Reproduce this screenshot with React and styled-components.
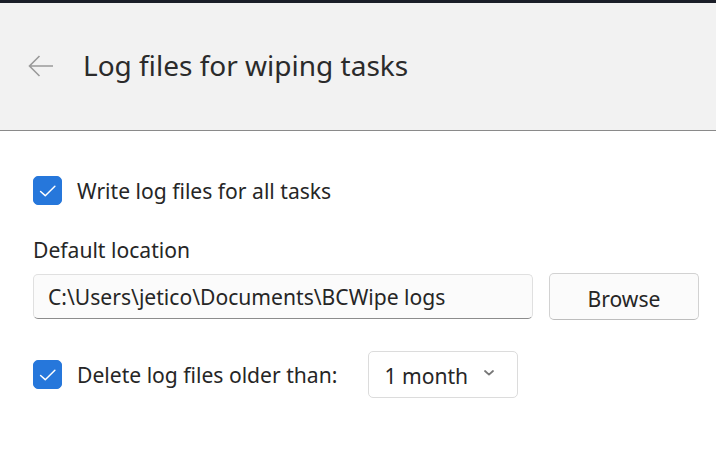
import React, { useState } from 'react'
import styled, { createGlobalStyle } from 'styled-components'

const GlobalStyle = createGlobalStyle`
    html, body {
        margin: 0;
        padding: 0;
        background: #fff;
    }
    body {
        font-family: "Noto Sans", "Open Sans", sans-serif;
        color: #262626;
    }
`;

function Checkbox({ checked, onChange }) {
    return (
        <CheckBoxStyled checked={checked} onClick={() => onChange(!checked)}>
            {checked && (
                <svg width="22" height="22" viewBox="0 0 16 16">
                    <path d="M2.6 8.4 L6 11.4 L13 4.6" fill="none" stroke="#fff" strokeWidth="1.1" strokeLinecap="round" strokeLinejoin="round" />
                </svg>
            )}
        </CheckBoxStyled>
    )
}

function App() {
    const [writeLogs, setWriteLogs] = useState(true)
    const [deleteOld, setDeleteOld] = useState(true)

    return (
        <>
            <GlobalStyle />
            <Page>
                <TopBar />
                <Header>
                    <BackButton aria-label="Back">
                        <svg width="26" height="22" viewBox="0 0 26 22">
                            <path d="M1.5 11 H25 M11.5 1 L1.5 11 L11.5 21" fill="none" stroke="#9a9a9a" strokeWidth="1.6" />
                        </svg>
                    </BackButton>
                    <Title>Log files for wiping tasks</Title>
                </Header>
                <Content>
                    <CheckRow>
                        <Checkbox checked={writeLogs} onChange={setWriteLogs} />
                        <Label>Write log files for all tasks</Label>
                    </CheckRow>
                    <FieldLabel>Default location</FieldLabel>
                    <PathRow>
                        <PathInput value="C:\Users\jetico\Documents\BCWipe logs" readOnly />
                        <Button>Browse</Button>
                    </PathRow>
                    <DeleteRow>
                        <Checkbox checked={deleteOld} onChange={setDeleteOld} />
                        <Label>Delete log files older than:</Label>
                        <Select>
                            <span>1 month</span>
                            <svg width="12" height="8" viewBox="0 0 12 8">
                                <path d="M2 2 L6 5.6 L10 2" fill="none" stroke="#777" strokeWidth="1.8" strokeLinecap="round" strokeLinejoin="round" />
                            </svg>
                        </Select>
                    </DeleteRow>
                </Content>
            </Page>
        </>
    )
}

const Page = styled.div`
    width: 716px;
    height: 459px;
    overflow: hidden;
    background: #fff;
`;

const TopBar = styled.div`
    height: 3px;
    background: #1b1e28;
`;

const Header = styled.header`
    height: 128px;
    box-sizing: border-box;
    background: #f2f2f2;
    border-bottom: 1px solid #8a8a8a;
    display: flex;
    align-items: center;
    padding: 0 0 0 28px;
`;

const BackButton = styled.div`
    display: flex;
    align-items: center;
    width: 55px;
    margin-top: -1px;
`;

const Title = styled.h1`
    margin: 0 0 4px;
    font-size: 28px;
    font-weight: 400;
    color: #2b2b2b;
`;

const Content = styled.div`
    display: flex;
    flex-direction: column;
    padding: 45px 0 0 33px;
`;

const CheckBoxStyled = styled.div`
    width: 29px;
    height: 29px;
    box-sizing: border-box;
    border-radius: 5px;
    background: ${p => p.checked ? '#2677db' : '#fff'};
    border: 1px solid ${p => p.checked ? '#2677db' : '#888'};
    display: flex;
    align-items: center;
    justify-content: center;
    flex-shrink: 0;
    cursor: pointer;
`;

const CheckRow = styled.div`
    display: flex;
    align-items: center;
    gap: 15px;
    height: 29px;
`;

const Label = styled.span`
    font-size: 21.1px;
    color: #262626;
`;

const FieldLabel = styled.div`
    margin-top: 32px;
    font-size: 21.1px;
    line-height: 26px;
    color: #262626;
`;

const PathRow = styled.div`
    display: flex;
    align-items: center;
    gap: 16px;
    margin-top: 10px;
`;

const PathInput = styled.input`
    width: 500px;
    height: 45px;
    box-sizing: border-box;
    padding: 0 14px;
    font-family: inherit;
    font-size: 21.1px;
    color: #262626;
    background: #fbfbfb;
    border: 1px solid #e0e0e0;
    border-bottom: 1.5px solid #8c8c8c;
    border-radius: 5px;
    outline: none;
`;

const Button = styled.button`
    width: 150px;
    height: 47px;
    box-sizing: border-box;
    font-family: inherit;
    font-size: 21.1px;
    color: #262626;
    background: #fbfbfb;
    border: 1px solid #d2d2d2;
    border-bottom-color: #bdbdbd;
    border-radius: 5px;
    cursor: pointer;
    padding-top: 4px;
`;

const DeleteRow = styled.div`
    display: flex;
    align-items: center;
    margin-top: 31px;
    ${CheckBoxStyled} {
        margin-right: 15px;
    }
`;

const Select = styled.div`
    margin-left: 31px;
    width: 150px;
    height: 47px;
    box-sizing: border-box;
    display: flex;
    align-items: center;
    justify-content: space-between;
    padding: 2px 22px 0 15px;
    border: 1px solid #dcdcdc;
    border-radius: 5px;
    background: #fff;
    font-size: 21.1px;
    color: #262626;
    svg {
        margin-top: -6px;
    }
`;

export default App
